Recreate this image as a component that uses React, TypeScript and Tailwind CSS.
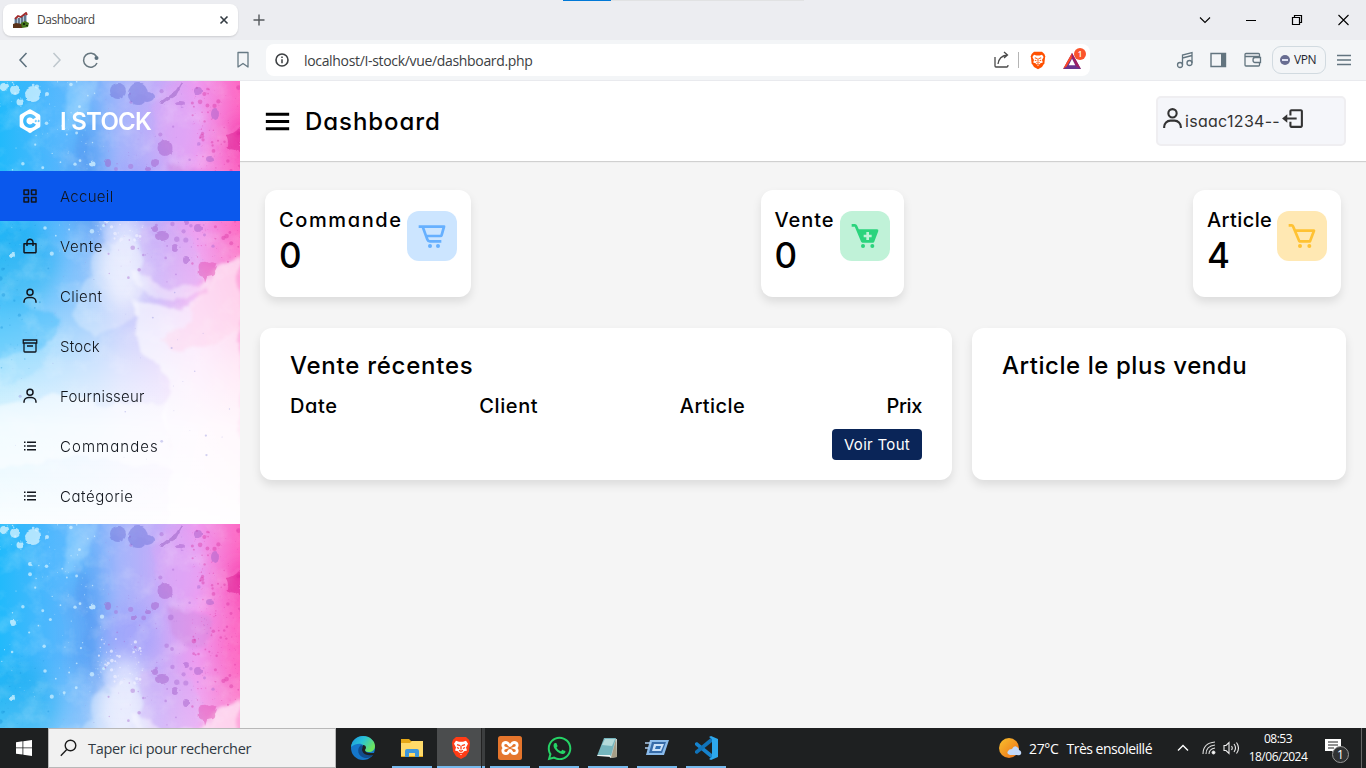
import type { ReactNode } from "react";
import {
  BiCart,
  BiCartAlt,
  BiGridAlt,
  BiListUl,
  BiLogOut,
  BiLogoCPlusPlus,
  BiMenu,
  BiShoppingBag,
  BiSolidCartAdd,
  BiUser,
} from "react-icons/bi";
import { FaWhatsapp } from "react-icons/fa";

const poppins = "font-[Inter,sans-serif] [font-feature-settings:'cv11','ss03']";
const segoe = "font-['Open_Sans','Noto_Sans',sans-serif]";

/* ---------- Watercolour background ---------- */

function makeDots(seed: number, count: number, x0: number, x1: number, y0: number, y1: number, big: number) {
  let s = seed;
  const rnd = () => {
    s = (s * 16807) % 2147483647;
    return s / 2147483647;
  };
  return Array.from({ length: count }, () => ({
    x: x0 + rnd() * (x1 - x0),
    y: y0 + rnd() * (y1 - y0),
    r: 0.4 + Math.pow(rnd(), 4) * big,
  }));
}

const whiteDots = makeDots(77, 110, 0, 105, 0, 175, 1.8);
const centreDots = makeDots(19, 80, 98, 145, 115, 160, 1.5);
const purpleDots = makeDots(431, 100, 105, 215, 5, 205, 2.5);
const pinkDots = makeDots(913, 180, 192, 240, 5, 185, 2);
const lowDots = makeDots(55, 34, 0, 230, 180, 380, 1.3);
const blueDots = makeDots(301, 45, 0, 50, 130, 290, 1.8);

const purpleSplats: [number, number, number, number][] = [
  [118, 10, 8, 8], [138, 13, 10, 11], [147, 16, 7, 5], [165, 67, 7.5, 8], [155, 82, 4, 4], [148, 88, 3, 2],
  [108, 82, 3, 4], [134, 94, 3, 3], [210, 78, 4, 3], [215, 33, 4, 6], [198, 10, 4, 4], [180, 22, 5, 2],
  [162, 155, 7, 5], [155, 148, 3, 3], [198, 147, 4, 4], [186, 141, 3, 3], [175, 167, 3, 4], [186, 179, 3, 4],
];

function Watercolour() {
  return (
    <svg className="absolute inset-0" width="240" height="647" viewBox="0 0 240 647">
      <defs>
        <linearGradient id="base" x1="0" x2="1">
          <stop offset="0" stopColor="#22bafb" />
          <stop offset=".2" stopColor="#4cb7fd" />
          <stop offset=".4" stopColor="#7bb4fb" />
          <stop offset=".5" stopColor="#a4b5fb" />
          <stop offset=".66" stopColor="#c4acf9" />
          <stop offset=".82" stopColor="#ee9bf0" />
          <stop offset="1" stopColor="#fd68c3" />
        </linearGradient>
        <linearGradient id="fade" x1="0" x2="0" y1="0" y2="1">
          <stop offset=".3" stopColor="#fff" stopOpacity="0" />
          <stop offset=".5" stopColor="#fff" stopOpacity=".28" />
          <stop offset=".64" stopColor="#fff" stopOpacity=".64" />
          <stop offset=".78" stopColor="#fff" stopOpacity=".88" />
          <stop offset="1" stopColor="#fff" stopOpacity=".98" />
        </linearGradient>
        <filter id="rough" x="-30%" y="-30%" width="160%" height="160%">
          <feTurbulence type="fractalNoise" baseFrequency=".045" numOctaves="4" seed="4" />
          <feDisplacementMap in="SourceGraphic" scale="16" xChannelSelector="R" yChannelSelector="G" />
          <feGaussianBlur stdDeviation="1.8" />
        </filter>
        <filter id="soft" x="-50%" y="-50%" width="200%" height="200%">
          <feTurbulence type="fractalNoise" baseFrequency=".03" numOctaves="3" seed="8" />
          <feDisplacementMap in="SourceGraphic" scale="20" xChannelSelector="R" yChannelSelector="G" />
          <feGaussianBlur stdDeviation="9" />
        </filter>
        <filter id="splat" x="-20%" y="-20%" width="140%" height="140%">
          <feTurbulence type="fractalNoise" baseFrequency=".16" numOctaves="2" seed="3" />
          <feDisplacementMap in="SourceGraphic" scale="3" xChannelSelector="R" yChannelSelector="G" />
          <feGaussianBlur stdDeviation=".5" />
        </filter>
        <filter id="grain" x="0" y="0" width="100%" height="100%">
          <feTurbulence type="fractalNoise" baseFrequency=".045" numOctaves="5" seed="11" />
          <feColorMatrix values="0 0 0 0 1  0 0 0 0 1  0 0 0 0 1  1.9 0 0 0 -.85" />
        </filter>
        <clipPath id="tile">
          <rect width="240" height="443" />
        </clipPath>
        <g id="paint" clipPath="url(#tile)">
          <rect width="240" height="443" fill="url(#base)" />
          <g filter="url(#soft)">
            <ellipse cx="18" cy="185" rx="38" ry="42" fill="#0aa4ee" opacity=".55" />
            <ellipse cx="86" cy="95" rx="14" ry="60" fill="#4593f0" opacity=".5" />
            <ellipse cx="62" cy="35" rx="22" ry="30" fill="#55bcff" opacity=".5" />
            <ellipse cx="130" cy="110" rx="25" ry="30" fill="#9c9cfb" opacity=".5" />
            <ellipse cx="246" cy="60" rx="14" ry="24" fill="#f33aae" opacity=".8" />
            <ellipse cx="242" cy="125" rx="18" ry="30" fill="#ff66c0" opacity=".45" />
            <ellipse cx="178" cy="45" rx="20" ry="35" fill="#dca9f8" opacity=".6" />
            <ellipse cx="122" cy="180" rx="22" ry="48" fill="#e8ecff" opacity=".8" />
          </g>
          <g filter="url(#rough)">
            <path d="M70 0h26l-4 18-10 30-18-2z" fill="#a8dcff" opacity=".4" />
            <path d="M80 40q12 35 18 72t10 62l-16-2q-2-60-18-105z" fill="#4f94ee" opacity=".25" />
            <path d="M170 82q28 2 38 16l-2 26q-22 4-38-18z" fill="#c987dc" opacity=".35" />
            <path d="M150 26q10-22 34-20l20 8-4 70-40-20z" fill="#e8a6f8" opacity=".22" />
            <path d="M96 174q8-8 16-12 16-18 28 6v64l-44 24-24-18z" fill="#fff" opacity=".28" />
            <path d="M144 145q28-5 50 15l12 34-24 20q-30 4-42-24z" fill="#d3a8f7" opacity=".38" />
          </g>
          <rect width="240" height="443" fill="url(#fade)" />
          <g filter="url(#rough)">
            <path d="M132 218q40 16 72-2l14-30 22-10v275H166l6-85-10-34 8-34-28-30z" fill="#fff" opacity=".6" />
            <path d="M158 258q20-10 34-15l4-36 26-22 24 4v60q-45 15-65 24z" fill="#ffd3eb" opacity=".45" />
            <path d="M-10 195q25 8 45 34l25 6-12 30-58 16z" fill="#36b9fa" opacity=".42" />
            <path d="M0 270l60-8-30 36-30 8z" fill="#91dcff" opacity=".3" />
            <path d="M-10 325q65-15 100-5t75 2l8 65-95-12-88 14z" fill="#fff" opacity=".5" />
            <path d="M135 188q38 34 76 10l-4 12q-44 20-74-8z" fill="#fff" opacity=".4" />
          </g>
          <rect width="240" height="443" filter="url(#grain)" opacity=".22" />
          <g fill="#d7f4ff" opacity=".75" filter="url(#splat)">
            <circle cx="33" cy="13" r="8" /><circle cx="15" cy="9" r="5" /><circle cx="4" cy="6" r="4" />
            <circle cx="20" cy="21" r="3.5" /><circle cx="47" cy="13" r="2" /><circle cx="30" cy="40" r="2" />
            <circle cx="93" cy="83" r="2.5" /><circle cx="13" cy="99" r="3" /><circle cx="12" cy="174" r="3" />
          </g>
          {whiteDots.map((d, i) => <circle key={i} cx={d.x} cy={d.y} r={d.r} fill="#d4f2ff" opacity=".7" />)}
          {centreDots.map((d, i) => <circle key={i} cx={d.x} cy={d.y} r={d.r} fill="#eef0ff" opacity=".7" />)}
          {purpleDots.map((d, i) => <circle key={i} cx={d.x} cy={d.y} r={d.r} fill="#a868cf" opacity=".42" />)}
          {pinkDots.map((d, i) => <circle key={i} cx={d.x} cy={d.y} r={d.r} fill="#d42f9d" opacity=".38" />)}
          {lowDots.map((d, i) => <circle key={i} cx={d.x} cy={d.y} r={d.r} fill="#8f8fdc" opacity=".4" />)}
          {blueDots.map((d, i) => <circle key={i} cx={d.x} cy={d.y} r={d.r} fill="#168fd8" opacity=".35" />)}
          <g filter="url(#splat)" opacity=".48">
            {purpleSplats.map(([x, y, rx, ry], i) => (
              <ellipse key={i} cx={x} cy={y} rx={rx} ry={ry} fill={i < 3 ? "#6d72d8" : "#a35fc8"} />
            ))}
            <path d="M160 21l16-12 5-8 1 2-6 12-14 8z" fill="#935bbe" />
            <path d="M226 54q7 0 14-8v25q-7-4-13-2 3-7-1-15z" fill="#d91d91" />
            <path d="M199 183q5-4 9-1 6-2 9 1 0 4-2 7 1 4-2 5l-6 1-2 6-1-6q-7-1-5-6-1-4 0-7z" fill="#e050b4" />
          </g>
        </g>
      </defs>
      <use href="#paint" />
      <use href="#paint" y="443" />
    </svg>
  );
}

/* ---------- Browser ---------- */

function TabStrip() {
  return (
    <div className={`relative flex h-10 shrink-0 items-center bg-[#ecedf1] ${segoe}`}>
      <div className="absolute left-[563px] top-0 flex h-px w-[241px] bg-[#e1e2e3]"><div className="w-12 bg-[#0078d7]" /></div>
      <div className="ml-[3px] flex h-8 w-[235px] items-center rounded-lg bg-white pl-[10px] pr-[9px] shadow-[0_1px_2px_#0002]">
        <svg width="16" height="16" viewBox="0 0 16 16">
          <path d="M1 12V7l2-2 3 1 3-3 3-2 2 2v9z" fill="#b6c9da" />
          <path d="M2 7l3-3 3 1 5-4 1 2" fill="none" stroke="#a32b2b" strokeWidth="1.8" />
          <path d="M3 7v5M6 6v6M9 5v7M12 3v8" stroke="#31465f" strokeWidth="1.2" />
          <path d="M0 12l3-1 6 1v4H0z" fill="#5a3218" />
          <path d="M8 11l4-2 4 2-1 4-6 1z" fill="#46761c" />
          <path d="M10 11h2v2h-2zm3 2h2v1h-2z" fill="#152d0a" />
        </svg>
        <span className="ml-2 text-[12px] tracking-[-0.48px] text-[#444]">Dashboard</span>
        <svg className="ml-auto" width="10" height="10" viewBox="0 0 10 10"><path d="M1.5 1.5l7 7m0-7l-7 7" stroke="#333b42" strokeWidth="1.6" /></svg>
      </div>
      <svg className="ml-[15px]" width="12" height="12"><path d="M6 .5v11M.5 6h11" stroke="#55595d" strokeWidth="1.4" /></svg>
      <div className="ml-auto mr-[17px] flex items-center gap-[35px] text-black">
        <svg width="12" height="12" viewBox="0 0 12 12" fill="none" stroke="currentColor"><path d="M1 3.5l5 5 5-5" strokeWidth="1.1" /></svg>
        <svg width="10" height="12" viewBox="0 0 10 12"><path d="M0 6.5h10" stroke="currentColor" /></svg>
        <svg width="12" height="12" viewBox="0 0 12 12" fill="none" stroke="currentColor"><path d="M1.5 3.5h7v7h-7zM3.5 3V1.5h7v7H9" strokeWidth="1.2" /></svg>
        <svg width="11" height="12" viewBox="0 0 11 12" stroke="currentColor"><path d="M.5 1l10 10m0-10l-10 10" strokeWidth="1.1" /></svg>
      </div>
    </div>
  );
}

const lionPath = "M6 1h10l3 3 1 3-1 9-3 5-5 3-5-3-3-5L2 7l1-3z";
const lionFace = "M6 5l3 1h4l3-1 2 3-2 4 1 3-3 1-3 4-3-4-3-1 1-3-2-4z";

function Lion({ width, height, fill }: { width: number; height: number; fill: string }) {
  return (
    <svg width={width} height={height} viewBox="1 0 20 25" preserveAspectRatio="none">
      <path d={lionPath} fill={fill} />
      <path d={lionFace} fill="#fff" />
      <path d="M7 9l3 1m5-1l-3 1M11 10v4m-2 1l2 1 2-1m-4 3h4M7 12l2 1m6-1l-2 1" fill="none" stroke={fill} strokeWidth="1.3" />
    </svg>
  );
}

function Toolbar() {
  return (
    <div className={`flex h-[41px] shrink-0 items-center border-b border-[#e9eaee] bg-[#f3f5f7] pl-[17px] ${segoe}`}>
      <svg width="84" height="18" viewBox="0 0 84 18" fill="none" strokeWidth="1.5">
        <path d="M9.5 2L3 9l6.5 7" stroke="#5b6f7c" />
        <path d="M36.5 2L43 9l-6.5 7" stroke="#bec7cd" />
        <path d="M79.5 5.5A7 7 0 1 0 80 12" stroke="#66767f" />
        <circle cx="79.5" cy="7" r="2" fill="#5b6f7c" />
      </svg>
      <svg className="ml-[135px]" width="13" height="18" viewBox="0 0 13 18" fill="none" stroke="#667984" strokeWidth="1.3"><path d="M2 1.5h10V16l-5-3.500L2 16z" strokeLinejoin="round" /></svg>
      <div className="ml-[17px] flex h-8 w-[824px] items-center rounded-lg bg-white pl-[9px] pr-[3px]">
        <svg width="14" height="14" viewBox="0 0 14 14" fill="none" stroke="#3d4043"><circle cx="7" cy="7" r="6" strokeWidth="1.6" /><path d="M7 6.2v4M7 3.5V5" strokeWidth="1.5" /></svg>
        <span className="ml-[15px] text-[14px] tracking-[-0.33px] text-[#3b3e42]">localhost/I-stock/vue/dashboard.php</span>
        <svg className="ml-auto" width="16" height="18" viewBox="0 0 16 18" fill="none" stroke="#4a4a4a" strokeWidth="1.3"><path d="M1 6v9q0 1 1 1h11q1 0 1-2M4 13q1-8 9-9M10 1l3.500 3-3.500 3" /></svg>
        <span className="ml-2 h-4 w-px bg-[#b5b5b5]" />
        <span className="ml-[11px]"><Lion width={16} height={19} fill="#ff5000" /></span>
        <div className="relative ml-[17px] h-[27px] w-[24px]">
          <svg className="mt-[6px]" width="18" height="16" viewBox="0 0 19 17">
            <path d="M9.5 0L19 17H0z" fill="#68348e" /><path d="M9.5 0L0 17l4-3 6-10z" fill="#ff4724" /><path d="M9.5 0L19 17l-5-3-5-10z" fill="#9e1f63" /><path d="M9.5 6l3.500 7H6z" fill="#fff" />
          </svg>
          <span className="absolute left-[11px] top-[1px] flex h-3 w-3 items-center justify-center rounded-full bg-[#fb542b] text-[8px] font-semibold leading-none text-white">1</span>
        </div>
      </div>
      <div className="ml-auto mr-[15px] flex items-center text-[#62747f]">
        <svg width="18" height="18" viewBox="0 0 18 18" fill="none" stroke="currentColor" strokeWidth="1.3"><circle cx="4" cy="14" r="2.5" /><circle cx="13.5" cy="12" r="2.5" /><path d="M6.5 14V4L16 1.5V12M6.5 7L16 4.5" /></svg>
        <svg className="ml-4" width="17" height="16" viewBox="0 0 17 16"><path d="M1 1.5h14.5v13H1z" fill="none" stroke="currentColor" strokeWidth="1.4" /><path d="M11 1h5v14h-5z" fill="currentColor" /></svg>
        <svg className="ml-[17px]" width="18" height="16" viewBox="0 0 18 16" fill="none" stroke="currentColor" strokeWidth="1.3"><path d="M15.5 5V2.5q0-1-1-1H2q-1 0-1 1V13q0 1 1 1h12.500q1 0 1-1v-2M1 4.500h14.500M16.500 5.500v5H11q-2 0-2-2.500t2-2.500z" /></svg>
        <div className="ml-[10px] flex h-7 w-[54px] items-center rounded-[9px] border border-[#d1dae0] pl-[7px]">
          <span className="flex h-[10px] w-[10px] items-center justify-center rounded-full bg-[#686d91]"><span className="h-[2px] w-1.5 bg-[#dfe2f3]" /></span>
          <span className="ml-1 text-[12px] tracking-[-0.4px] text-[#1d2530]">VPN</span>
        </div>
        <svg className="ml-[11px]" width="14" height="12"><path d="M0 1.5h14M0 6h14M0 10.5h14" stroke="currentColor" strokeWidth="1.3" /></svg>
      </div>
    </div>
  );
}

/* ---------- Application ---------- */

function ArchiveIcon() {
  return (
    <svg width="18" height="18" viewBox="0 0 24 24" fill="none" stroke="currentColor" strokeWidth="1.7"><path d="M3 4h18v4H3zM4 8v11q0 1 1 1h14q1 0 1-1V8M8 12h8" /></svg>
  );
}

const navItems: { label: string; icon: ReactNode; spacing: string; active?: boolean }[] = [
  { label: "Accueil", icon: <BiGridAlt />, spacing: "tracking-[0.3px]", active: true },
  { label: "Vente", icon: <BiShoppingBag />, spacing: "tracking-[0.65px]" },
  { label: "Client", icon: <BiUser />, spacing: "tracking-[0.4px]" },
  { label: "Stock", icon: <ArchiveIcon />, spacing: "tracking-[0.15px]" },
  { label: "Fournisseur", icon: <BiUser />, spacing: "tracking-[0.22px]" },
  { label: "Commandes", icon: <BiListUl />, spacing: "tracking-[1.05px]" },
  { label: "Catégorie", icon: <BiListUl />, spacing: "tracking-[0.55px]" },
];

function Sidebar() {
  return (
    <aside className="relative w-60 shrink-0 overflow-hidden">
      <Watercolour />
      <div className="relative">
        <div className="flex h-20 items-center text-white">
          <span className="flex w-[60px] justify-center text-[28px]"><BiLogoCPlusPlus /></span>
          <span className="pt-[2px] text-[24px] font-semibold tracking-[-0.75px]">I STOCK</span>
        </div>
        <nav className="mt-2.5">
          {navItems.map((item) => (
            <a key={item.label} className={`flex h-[50px] items-center text-[#11151c] ${item.active ? "bg-[#0a58ed]" : ""}`}>
              <span className="flex w-[60px] justify-center text-[18px]">{item.icon}</span>
              <span className={`pt-[3px] text-[15px] font-[350] ${item.spacing}`}>{item.label}</span>
            </a>
          ))}
        </nav>
      </div>
    </aside>
  );
}

function StatCard({ label, value, icon, width, tint, spacing }: { label: string; value: string; icon: ReactNode; width: string; tint: string; spacing: string }) {
  return (
    <div className={`flex h-[107px] justify-between rounded-xl bg-white px-[14px] shadow-[0_5px_10px_rgba(0,0,0,0.1)] ${width}`}>
      <div className="w-0 whitespace-nowrap pt-[15px]">
        <div className={`text-[20px] font-[450] leading-[30px] ${spacing}`}>{label}</div>
        <div className="mt-[-1px] text-[35px] font-[450] leading-[42px]">{value}</div>
      </div>
      <div className={`mt-[21px] flex h-[50px] w-[50px] items-center justify-center rounded-xl text-[32px] ${tint}`}>{icon}</div>
    </div>
  );
}

function Content() {
  return (
    <main className="flex min-w-0 flex-1 flex-col bg-[#f5f5f5]">
      <header className="flex h-20 shrink-0 items-center bg-white pl-5 pr-5 shadow-[0_1px_1px_rgba(0,0,0,0.15)]">
        <BiMenu className="text-[35px]" />
        <h1 className="ml-[10px] pt-[2px] text-[24px] font-[450] tracking-[0.95px]">Dashboard</h1>
        <div className="ml-auto flex h-[50px] w-[190px] rounded-[5px] border-2 border-[#efeef1] bg-[#f5f6fa] pl-[2px] pt-[8px] text-[#333]">
          <BiUser className="text-[25px]" />
          <span className="pt-[3px] text-[16px] leading-6 tracking-[0.3px]">isaac1234--</span>
          <BiLogOut className="text-[25px]" />
        </div>
      </header>
      <div className="mt-[29px] flex justify-between px-[25px]">
        <StatCard label="Commande" value="0" width="w-[206px]" tint="bg-[#cce5ff] text-[#66b0ff]" icon={<BiCartAlt />} spacing="tracking-[1.6px]" />
        <StatCard label="Vente" value="0" width="w-[143px]" tint="bg-[#c0f2d8] text-[#2bd47d]" icon={<BiSolidCartAdd />} spacing="tracking-[0.95px]" />
        <StatCard label="Article" value="4" width="w-[148px]" tint="bg-[#ffe8b3] text-[#ffc233]" icon={<BiCart />} spacing="tracking-[0.4px]" />
      </div>
      <div className="mt-[31px] flex justify-between px-5">
        <section className="flex h-[152px] w-[692px] flex-col rounded-xl bg-white px-[30px] pt-5 shadow-[0_5px_10px_rgba(0,0,0,0.1)]">
          <h2 className="text-[24px] font-[450] leading-9 tracking-[0.75px]">Vente récentes</h2>
          <div className="mt-[7px] flex justify-between text-[20px] font-[450] leading-[30px]">
            <span className="tracking-[0.65px]">Date</span>
            <span className="tracking-[0.6px]">Client</span>
            <span className="tracking-[0.4px]">Article</span>
            <span className="tracking-[-0.4px]">Prix</span>
          </div>
          <button className="mt-2 h-[31px] w-[90px] self-end rounded bg-[#0a2558] pt-px text-[15px] tracking-[0.3px] text-white">Voir Tout</button>
        </section>
        <section className="h-[152px] w-[374px] rounded-xl bg-white px-[30px] pt-5 shadow-[0_5px_10px_rgba(0,0,0,0.1)]">
          <h2 className="text-[24px] font-[450] leading-9 tracking-[0.55px]">Article le plus vendu</h2>
        </section>
      </div>
    </main>
  );
}

/* ---------- Taskbar ---------- */

function Task({ children, className = "", open = true }: { children: ReactNode; className?: string; open?: boolean }) {
  return (
    <div className={`flex h-10 flex-col items-center pt-2 ${className}`}>
      {children}
      {open && <span className="mt-auto h-0.5 w-full bg-[#76b9ed]" />}
    </div>
  );
}

function Taskbar() {
  return (
    <footer className={`flex h-10 shrink-0 bg-[#1e2021] text-white ${segoe}`}>
      <div className="flex w-12 items-center justify-center">
        <svg width="16" height="16" viewBox="0 0 16 16" fill="#fff"><path d="M0 2.2l6.500-.9v6.200H0zM7.300 1.200L16 0v7.500H7.300zM0 8.300h6.500v6.300L0 13.700zM7.300 8.300H16V16l-8.700-1.200z" /></svg>
      </div>
      <div className="flex w-72 items-center border border-[#b8b8b8] bg-[#f1f1f1] pl-[11px] text-[#303942]">
        <svg width="17" height="18" viewBox="0 0 17 18" fill="none" stroke="#1c1c1c" strokeWidth="1.4"><circle cx="10.5" cy="6.5" r="5.3" /><path d="M6.8 10.5L.8 16.7" /></svg>
        <span className="ml-[11px] pt-[2px] text-[14.5px] tracking-[-0.31px]">Taper ici pour rechercher</span>
      </div>
      <div className="ml-[7px] flex">
        <Task className="w-10" open={false}>
          <svg width="24" height="24" viewBox="0 0 24 24">
            <defs>
              <linearGradient id="edgeTop" x1="0" x2="1" y2=".5"><stop stopColor="#1b93dc" /><stop offset=".5" stopColor="#29c3d8" /><stop offset="1" stopColor="#6de45e" /></linearGradient>
            </defs>
            <circle cx="12" cy="12" r="12" fill="#1576ca" />
            <path d="M0 11C1 4 6 0 12 0c7 0 12 5 12 10 0 4-3 6-6 6-3 0-5-1-4-3 1-5-7-8-14-2z" fill="url(#edgeTop)" />
            <path d="M10 9c-5 4-3 12 4 13 4 .6 7-1 9-4-7 3-12-2-9-7z" fill="#124d8e" />
            <path d="M12 9q3 0 3 3l-1 2q0 3 6 3h5l-1 2c-6 1-12 0-13-5z" fill="#1e2021" />
          </svg>
        </Task>
        <Task className="ml-[9px] w-10">
          <svg width="22" height="24" viewBox="0 0 22 24"><path d="M0 3h8l2 2h12v16H0z" fill="#e6a817" /><path d="M0 7h9l2-2h11v15H0z" fill="#ffda69" /><path d="M4 21v-6q0-2 2-2h10q2 0 2 2v6h-4v-4H8v4z" fill="#3d97dc" /></svg>
        </Task>
        <Task className="ml-[5px] w-[45px] bg-[#4b4d4e]"><span className="ml-[3px]"><Lion width={20} height={24} fill="#ff3c16" /></span></Task>
        <Task className="-ml-[1px] w-[4px] border-l border-[#222] bg-[#3c3e3f]"><span /></Task>
        <Task className="ml-[5px] w-10">
          <svg width="24" height="24" viewBox="0 0 24 24"><rect width="24" height="24" rx="2.5" fill="#e5752c" /><path d="M8 6.500c-4 0-4 4.500-1 5.500-3 1-3 5.500 1 5.500 3 0 2-3 4-3s1 3 4 3c4 0 4-4.500 1-5.500 3-1 3-5.500-1-5.500-3 0-2 3-4 3s-1-3-4-3z" fill="none" stroke="#fff" strokeWidth="2.8" /></svg>
        </Task>
        <Task className="ml-[9px] w-10"><FaWhatsapp className="-mt-px text-[27px] text-[#25d366]" /></Task>
        <Task className="ml-[9px] w-10">
          <svg width="24" height="24" viewBox="0 0 24 24"><path d="M9 2l12 1v18l-7 1z" fill="#c8d3d1" /><path d="M8 2h12l-5 18H1z" fill="#75b5bd" /><path d="M9 3h10l-3 7-10-1z" fill="#b4dada" /><path d="M1 19h13l1 2-13-1z" fill="#eef4f4" /><path d="M20 3l1 18-6 1z" fill="#a59d86" /></svg>
        </Task>
        <Task className="ml-[9px] w-10">
          <svg width="24" height="24" viewBox="0 0 24 24"><path d="M5 4h19l-5 15H1z" fill="#8bbbea" /><path d="M7 6h14l-4 11H4z" fill="#376ba8" /><path d="M9 8h10l-3 7H7z" fill="#cce2f9" /><path d="M11 10h5l-1 3h-5z" fill="#306fb4" /><path d="M0 7h6M0 12h4" stroke="#adcbec" strokeWidth="1.5" /></svg>
        </Task>
        <Task className="ml-[9px] w-10">
          <svg width="24" height="24" viewBox="0 0 24 24"><path d="M1 7l2-1 15 12v5L1 9z" fill="#1683ce" /><path d="M1 17l2 1L18 6V1L1 15z" fill="#1073ba" /><path d="M17 0l7 3v18l-7 3-2-1 3-2V3l-3-2z" fill="#2da8ed" /></svg>
        </Task>
      </div>
      <div className="ml-auto flex items-center">
        <svg width="23" height="22" viewBox="0 0 23 22">
          <defs><linearGradient id="sun" x2="1" y2="1"><stop stopColor="#f9c12e" /><stop offset="1" stopColor="#ec6d18" /></linearGradient></defs>
          <circle cx="10" cy="11" r="10" fill="url(#sun)" /><path d="M11 18q-4-1-2-4 1-2 4-2 2-4 5-2 2 1 2 3 3 1 2 4-1 2-4 1z" fill="#c1d8fa" />
        </svg>
        <span className="ml-[7px] text-[14px] tracking-[-0.35px]">27°C</span>
        <span className="ml-[8px] text-[14px] tracking-[-0.5px]">Très ensoleillé</span>
        <svg className="ml-[25px]" width="12" height="8" fill="none" stroke="#fff" strokeWidth="1.4"><path d="M1 6.5L6 1.5l5 5" /></svg>
        <svg className="ml-[13px]" width="14" height="14" viewBox="0 0 14 14" fill="none" stroke="#ddd"><path d="M1 13Q1 2 13 1M4 13q0-8 9-9M7 13q0-5 6-6" strokeWidth="1.1" /><circle cx="11.5" cy="11.5" r="1.5" fill="#fff" /></svg>
        <svg className="ml-[7px]" width="18" height="14" viewBox="0 0 18 14" fill="none" stroke="#eee" strokeWidth="1.1"><path d="M1 4.5h2l3-3v11l-3-3H1zM8.5 5q1.500 2 0 4M11 3q3 4 0 8M13.500 1.500q4 5.500 0 11" /></svg>
        <div className="ml-[7px] w-[60px] text-center text-[12px] leading-[18px] tracking-[-0.5px]"><div>08:53</div><div className="whitespace-nowrap">18/06/2024</div></div>
        <div className="relative ml-[17px] h-6 w-[36px]">
          <svg width="16" height="18" viewBox="0 0 16 18"><path d="M0 3h16v12h-5l-2 2-2-2H0z" fill="#fff" /><path d="M3 6h10M3 9h10M3 12h6" stroke="#222" /></svg>
          <span className="absolute left-[7px] top-[10px] flex h-[17px] w-[17px] items-center justify-center rounded-full border border-[#999] bg-[#303233] text-[12px] leading-none">1</span>
        </div>
        <span className="h-10 w-px bg-[#666]" /><span className="w-1" />
      </div>
    </footer>
  );
}

export default function App() {
  return (
    <div className="flex h-[768px] w-[1366px] flex-col overflow-hidden bg-white">
      <TabStrip />
      <Toolbar />
      <div className={`flex h-[647px] text-black ${poppins}`}>
        <Sidebar />
        <Content />
      </div>
      <Taskbar />
    </div>
  );
}
